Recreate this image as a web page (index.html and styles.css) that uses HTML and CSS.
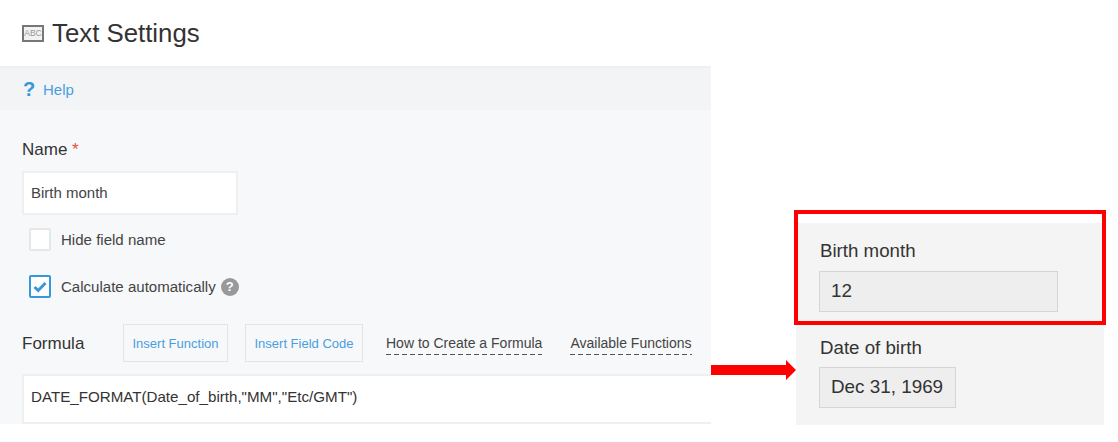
FILE: index.html
```html
<!DOCTYPE html>
<html lang="en">
<head>
  <meta charset="UTF-8">
  <title>Text Settings</title>
  <link rel="stylesheet" href="styles.css">
</head>

<body>
  <div class="page">
    <div class="settings">
      <div class="title-bar">
        <span class="abc-icon">ABC</span>
        <h1>Text Settings</h1>
      </div>

      <div class="help-bar">
        <span class="help-mark">?</span>
        <a class="help-link">Help</a>
      </div>

      <form class="form">
        <label class="field-label">Name <span class="required">*</span></label>
        <div class="name-input">Birth month</div>

        <div class="check-row">
          <span class="checkbox"></span>
          <span>Hide field name</span>
        </div>

        <div class="check-row check-row-second">
          <span class="checkbox checked">
            <svg width="16" height="14" viewBox="0 0 16 14">
              <path d="M2.5 7 L6.2 10.5 L13.5 3" fill="none" stroke="#3498db" stroke-width="3"/>
            </svg>
          </span>
          <span>Calculate automatically</span>
          <span class="hint">?</span>
        </div>

        <div class="formula-row">
          <label class="field-label">Formula</label>
          <button type="button" class="insert-btn btn-function">Insert Function</button>
          <button type="button" class="insert-btn btn-code">Insert Field Code</button>
          <a class="doc-link link-how">How to Create a Formula</a>
          <a class="doc-link link-available">Available Functions</a>
        </div>

        <div class="formula-input">DATE_FORMAT(Date_of_birth,"MM","Etc/GMT")</div>
      </form>
    </div>

    <div class="preview">
      <div class="preview-field">
        <div class="preview-label">Birth month</div>
        <div class="preview-value value-month">12</div>
      </div>
      <div class="preview-field field-date">
        <div class="preview-label">Date of birth</div>
        <div class="preview-value value-date">Dec 31, 1969</div>
      </div>
    </div>

    <div class="red-box"></div>
    <svg class="red-arrow" width="85" height="20" viewBox="0 0 85 20">
      <path d="M0 5 H75 V0 L85 10 L75 20 V15 H0 Z" fill="#ff0000"/>
    </svg>
  </div>
</body>
</html>
```

FILE: styles.css
```css
* {
  box-sizing: border-box;
  font-family: "Liberation Sans", Arial, sans-serif;
}
body {
  margin: 0;
  padding: 0;
  background: #fff;
  color: #333;
}
.page {
  position: relative;
  display: flex;
  align-items: flex-start;
  height: 442px;
}
.settings {
  width: 711px;
  flex-shrink: 0;
}

.title-bar {
  display: flex;
  align-items: center;
  gap: 8px;
  height: 68px;
  padding: 0 22px;
  border-bottom: 2px solid #eeeff0;
}
h1 {
  margin: 0;
  font-size: 25.8px;
  font-weight: normal;
  color: #333;
}
.abc-icon {
  width: 22px;
  height: 17px;
  border: 2px solid #777;
  background: #f2f2f2;
  color: #999;
  font-size: 8.5px;
  line-height: 13px;
  text-align: center;
}

.help-bar {
  display: flex;
  align-items: center;
  gap: 8px;
  height: 42px;
  padding-left: 23px;
  background: #f3f4f6;
}
.help-mark {
  color: #3498db;
  font-size: 20px;
  font-weight: bold;
  width: 12px;
}
.help-link {
  color: #4a9ee0;
  font-size: 15px;
}

.form {
  height: 314px;
  padding-top: 30px;
  background: #f7f8fa;
}
.field-label {
  display: block;
  margin-left: 22px;
  font-size: 17px;
  line-height: 20px;
  color: #333;
}
.required {
  color: #e74c3c;
}
.name-input {
  width: 216px;
  height: 44px;
  margin: 11px 0 0 22px;
  padding-left: 7px;
  background: #fff;
  border: 2px solid #eeeff0;
  font-size: 15px;
  line-height: 40px;
  color: #444;
}

.check-row {
  display: flex;
  align-items: center;
  gap: 10px;
  height: 23px;
  margin: 13px 0 0 29px;
  font-size: 15.05px;
  color: #444;
}
.check-row-second {
  margin-top: 24px;
}
.checkbox {
  display: flex;
  align-items: center;
  justify-content: center;
  width: 22px;
  height: 23px;
  background: #fff;
  border: 2px solid #e6e7e9;
  border-radius: 2px;
}
.checkbox.checked {
  border-color: #3498db;
}
.hint {
  width: 18px;
  height: 18px;
  margin-left: -5px;
  border-radius: 50%;
  background: #999;
  color: #fff;
  font-size: 13px;
  font-weight: bold;
  line-height: 18px;
  text-align: center;
}

.formula-row {
  display: flex;
  align-items: center;
  height: 38px;
  margin-top: 26px;
}
.formula-row .field-label {
  width: 101px;
  flex-shrink: 0;
  padding-top: 2px;
}
.insert-btn {
  height: 38px;
  padding: 0;
  background: #f7f8fa;
  border: 1px solid #e3e4e6;
  color: #4a9ee0;
  font-size: 13px;
}
.btn-function {
  width: 105px;
  margin-right: 17px;
}
.btn-code {
  width: 118px;
  margin-right: 23px;
}
.doc-link {
  margin-top: 3px;
  padding-bottom: 4px;
  background: repeating-linear-gradient(to right, #555 0 5px, transparent 5px 8px) left bottom / 100% 1px no-repeat;
  color: #444;
  font-size: 14px;
  white-space: nowrap;
}
.link-how {
  margin-right: 28px;
}

.formula-input {
  height: 50px;
  margin: 12px 0 0 22px;
  padding: 11px 0 0 7px;
  background: #fff;
  border: 2px solid #eeeff0;
  border-right: none;
  font-size: 15.15px;
  line-height: 20px;
  color: #333;
}

.preview {
  width: 308px;
  height: 202px;
  margin: 223px 0 0 85px;
  padding: 17px 23px 0;
  background: #f4f4f4;
}
.preview-label {
  padding-left: 1px;
  font-size: 18.7px;
  line-height: 22px;
  color: #333;
}
.preview-value {
  height: 41px;
  margin-top: 9px;
  padding-left: 11px;
  background: #eee;
  border: 1px solid #d5d5d5;
  font-size: 18.85px;
  line-height: 37px;
  color: #333;
}
.value-month {
  width: 239px;
}
.value-date {
  width: 137px;
}
.field-date {
  margin-top: 25px;
}
.field-date .preview-value {
  margin-top: 8px;
}

/* annotations drawn over the screenshot */
.red-box {
  position: absolute;
  left: 794px;
  top: 210px;
  width: 312px;
  height: 115px;
  border: 4px solid #ff0000;
}
.red-arrow {
  position: absolute;
  left: 711px;
  top: 360px;
}
```
